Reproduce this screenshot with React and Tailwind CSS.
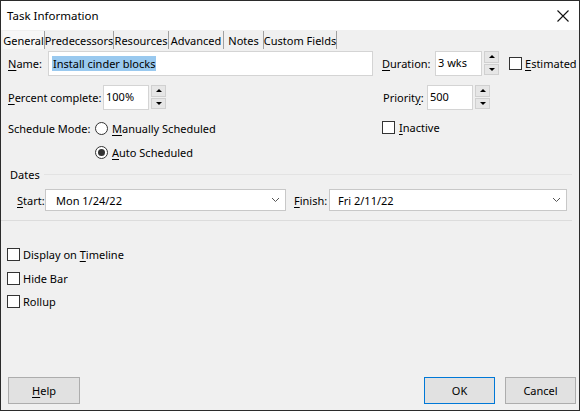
import React from "react";

const font = { fontFamily: '"Noto Sans", "Open Sans", sans-serif' };

function U({ children }) {
  return <span className="underline underline-offset-2">{children}</span>;
}

function Spinner() {
  return (
    <div className="flex flex-col gap-[1px] ml-[2px] h-[24px] w-[15px]">
      <div className="flex-1 bg-[#e6e6e6] border border-[#d0d0d0] flex items-center justify-center">
        <div className="w-0 h-0 border-l-[3px] border-r-[3px] border-b-[3px] border-l-transparent border-r-transparent border-b-black" />
      </div>
      <div className="flex-1 bg-[#e6e6e6] border border-[#d0d0d0] flex items-center justify-center">
        <div className="w-0 h-0 border-l-[3px] border-r-[3px] border-t-[3px] border-l-transparent border-r-transparent border-t-black" />
      </div>
    </div>
  );
}

function Box({ checked }) {
  return (
    <div className="w-[13px] h-[13px] border border-[#333] bg-white shrink-0 flex items-center justify-center">
      {checked && <div className="w-[7px] h-[7px] bg-black" />}
    </div>
  );
}

function Radio({ checked }) {
  return (
    <div className="w-[13px] h-[13px] rounded-full border border-[#333] bg-white shrink-0 flex items-center justify-center">
      {checked && <div className="w-[7px] h-[7px] rounded-full bg-[#333]" />}
    </div>
  );
}

function Chevron() {
  return (
    <svg width="9" height="6" viewBox="0 0 9 6" className="shrink-0">
      <path d="M1 1 L4.5 4.5 L8 1" fill="none" stroke="#555" strokeWidth="1" />
    </svg>
  );
}

function Tab({ w, active, children }) {
  return (
    <div
      className={`h-[18px] flex items-center justify-center border-r border-[#a0a0a0] ${w} ${
        active ? "bg-[#f7f7f7]" : ""
      }`}
    >
      {children}
    </div>
  );
}

export default function App() {
  return (
    <div
      style={font}
      className="w-[580px] h-[411px] border border-[#2b2b2b] bg-[#f0f0f0] flex flex-col text-[11px] text-black leading-none overflow-hidden whitespace-nowrap"
    >
      {/* title bar */}
      <div className="h-[29px] bg-white flex items-center justify-between pl-[6px] pr-[10px] shrink-0">
        <span className="text-[11.5px]">Task Information</span>
        <svg width="12" height="12" viewBox="0 0 12 12">
          <path d="M0.5 0.5 L11.5 11.5 M11.5 0.5 L0.5 11.5" stroke="#111" strokeWidth="1.1" />
        </svg>
      </div>

      {/* tabs */}
      <div className="h-[20px] flex items-center pl-[2px] shrink-0">
        <Tab w="w-[42px]" active>General</Tab>
        <Tab w="w-[69px]">Predecessors</Tab>
        <Tab w="w-[55px]">Resources</Tab>
        <Tab w="w-[55px]">Advanced</Tab>
        <Tab w="w-[40px]">Notes</Tab>
        <Tab w="w-[73px]">Custom Fields</Tab>
      </div>

      {/* row 1 */}
      <div className="h-[26px] flex items-center pl-[7px] shrink-0">
        <span className="w-[40px]">
          <U>N</U>ame:
        </span>
        <div className="w-[325px] h-[25px] bg-white border border-[#d4d4d4] flex items-center pl-[3px]">
          <span className="bg-[#99c9ef] px-[1px] py-[2px]">Install cinder blocks</span>
        </div>
        <span className="ml-[9px] w-[53px]">
          <U>D</U>uration:
        </span>
        <div className="w-[47px] h-[25px] bg-white border border-[#d4d4d4] flex items-start pt-[5px] pl-[2px]">
          3 wks
        </div>
        <Spinner />
        <div className="ml-[10px] flex items-center gap-[3px]">
          <Box />
          <span>
            <U>E</U>stimated
          </span>
        </div>
      </div>

      {/* row 2 */}
      <div className="h-[26px] mt-[8px] flex items-center pl-[7px] shrink-0">
        <span className="w-[95px]">
          <U>P</U>ercent complete:
        </span>
        <div className="w-[46px] h-[25px] bg-white border border-[#d4d4d4] flex items-start pt-[5px] pl-[2px]">
          100%
        </div>
        <Spinner />
        <span className="ml-[217px] w-[44px]">
          Priorit<U>y</U>:
        </span>
        <div className="w-[46px] h-[25px] bg-white border border-[#d4d4d4] flex items-start pt-[5px] pl-[2px]">
          500
        </div>
        <Spinner />
      </div>

      {/* row 3 */}
      <div className="h-[16px] mt-[10px] flex items-center pl-[7px] shrink-0">
        <span className="w-[87px]">Schedule Mode:</span>
        <div className="flex items-center gap-[4px] w-[287px]">
          <Radio />
          <span>
            <U>M</U>anually Scheduled
          </span>
        </div>
        <div className="flex items-center gap-[4px] -mt-[1px]">
          <Box />
          <span>
            <U>I</U>nactive
          </span>
        </div>
      </div>

      {/* row 4 */}
      <div className="h-[16px] mt-[8px] flex items-center pl-[94px] shrink-0">
        <div className="flex items-center gap-[4px]">
          <Radio checked />
          <span>
            <U>A</U>uto Scheduled
          </span>
        </div>
      </div>

      {/* dates heading */}
      <div className="h-[16px] mt-[6px] flex items-center pl-[9px] pr-[7px] shrink-0">
        <span>Dates</span>
        <div className="flex-1 h-px bg-[#e3e3e3] ml-[4px]" />
      </div>

      {/* dates row */}
      <div className="h-[22px] mt-[7px] flex items-center pl-[16px] pr-[12px] shrink-0">
        <span className="w-[28px]">
          <U>S</U>tart:
        </span>
        <div className="w-[241px] h-[22px] bg-white border border-[#c8c8c8] flex items-center justify-between pl-[10px] pr-[5px]">
          <span>Mon 1/24/22</span>
          <Chevron />
        </div>
        <span className="ml-[8px] w-[35px]">
          <U>F</U>inish:
        </span>
        <div className="flex-1 h-[22px] bg-white border border-[#c8c8c8] flex items-center justify-between pl-[8px] pr-[5px]">
          <span>Fri 2/11/22</span>
          <Chevron />
        </div>
      </div>

      {/* separator */}
      <div className="h-px mt-[9px] mr-[7px] bg-[#dcdcdc] shrink-0" />

      {/* checkboxes */}
      <div className="h-[16px] mt-[25px] flex items-center gap-[3px] pl-[6px] shrink-0">
        <Box />
        <span>
          Display on <U>T</U>imeline
        </span>
      </div>
      <div className="h-[16px] mt-[8px] flex items-center gap-[3px] pl-[6px] shrink-0">
        <Box />
        <span>Hide Bar</span>
      </div>
      <div className="h-[16px] mt-[7px] flex items-center gap-[3px] pl-[6px] shrink-0">
        <Box />
        <span>Rollup</span>
      </div>

      <div className="flex-1" />

      {/* buttons */}
      <div className="h-[27px] mb-[6px] flex items-center pl-[7px] pr-[3px] shrink-0">
        <div className="w-[72px] h-[27px] bg-[#e1e1e1] border border-[#adadad] flex items-center justify-center">
          <span>
            <U>H</U>elp
          </span>
        </div>
        <div className="flex-1" />
        <div className="w-[71px] h-[27px] bg-[#e1e1e1] border border-[#0078d7] flex items-center justify-center">
          OK
        </div>
        <div className="ml-[10px] w-[71px] h-[27px] bg-[#e1e1e1] border border-[#adadad] flex items-center justify-center">
          Cancel
        </div>
      </div>
    </div>
  );
}
